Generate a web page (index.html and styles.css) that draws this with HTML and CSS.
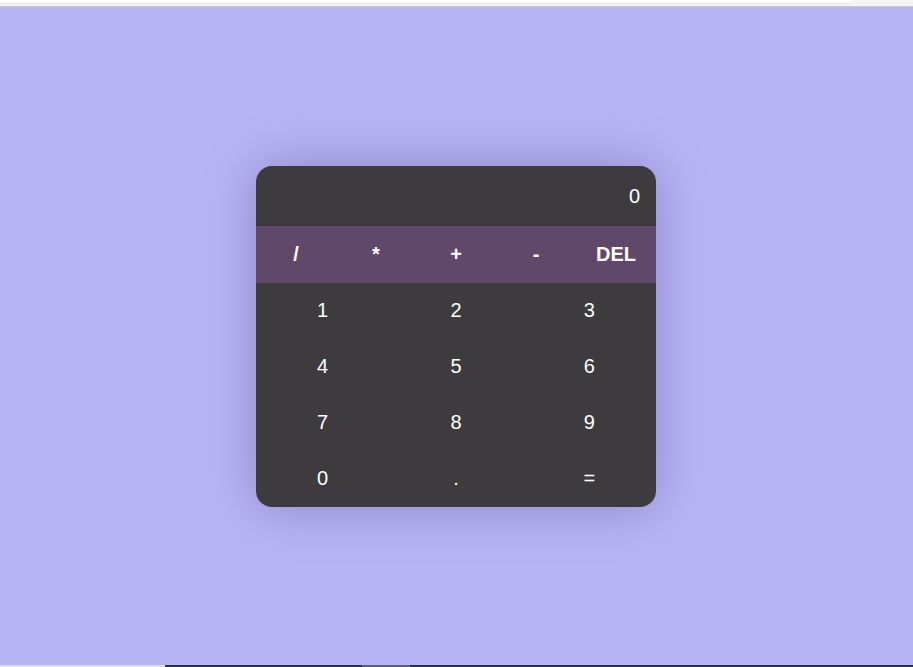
FILE: index.html
```html
<!DOCTYPE html>
<html>
<head>
<meta charset="utf-8">
<link rel="stylesheet" href="styles.css">
</head>
<body>
<div class="topbar"><div class="tab"></div><div class="tab-rest"></div></div>
<main class="stage">
  <div class="calc">
    <div class="display">0</div>
    <div class="ops">
      <button class="op">/</button>
      <button class="op">*</button>
      <button class="op">+</button>
      <button class="op">-</button>
      <button class="op">DEL</button>
    </div>
    <div class="digits">
      <button class="key">1</button>
      <button class="key">2</button>
      <button class="key">3</button>
      <button class="key">4</button>
      <button class="key">5</button>
      <button class="key">6</button>
      <button class="key">7</button>
      <button class="key">8</button>
      <button class="key">9</button>
      <button class="key">0</button>
      <button class="key">.</button>
      <button class="key">=</button>
    </div>
  </div>
</main>
<div class="taskbar">
  <div class="tb-left"></div>
  <div class="tb-a"></div>
  <div class="tb-b"></div>
  <div class="tb-c"></div>
</div>
</body>
</html>
```
FILE: styles.css
```css
html, body {
  margin: 0;
  padding: 0;
  height: 667px;
  overflow: hidden;
}
body {
  display: flex;
  flex-direction: column;
  background: #b8b4f4;
  font-family: "Liberation Sans", Arial, sans-serif;
}
.topbar {
  height: 7px;
  display: flex;
  background: #f4f4f4;
  border-bottom: 1px solid #c9c9c9;
  box-sizing: border-box;
}
.tab {
  width: 852px;
  height: 3px;
  background: #fcfcfc;
  border-bottom: 1px solid #e4e4e4;
  border-bottom-right-radius: 3px;
}
.tab-rest { flex: 1; }
.stage {
  flex: 1;
  display: flex;
  align-items: center;
  justify-content: center;
  padding-right: 1px;
}
.calc {
  width: 400px;
  background: #3d3b3e;
  border-radius: 16px;
  overflow: hidden;
  box-shadow: 0 0 50px rgba(60, 50, 120, 0.35);
}
.display {
  height: 60px;
  box-sizing: border-box;
  padding: 0 16px 0 0;
  display: flex;
  align-items: center;
  justify-content: flex-end;
  color: #ffffff;
  font-size: 20px;
  line-height: 1;
}
.ops {
  height: 57px;
  background: #61486a;
  display: grid;
  grid-template-columns: repeat(5, 1fr);
}
.op, .key {
  background: none;
  border: none;
  padding: 0;
  margin: 0;
  color: #ffffff;
  font-family: "Liberation Sans", Arial, sans-serif;
  font-size: 20px;
  cursor: pointer;
}
.op { font-weight: bold; }
.digits {
  display: grid;
  grid-template-columns: repeat(3, 1fr);
  grid-auto-rows: 56px;
}
.taskbar {
  height: 2px;
  display: flex;
}
.tb-left { width: 165px; background: #dedede; }
.tb-a { width: 197px; background: #283044; }
.tb-b { width: 48px; background: #5b6072; }
.tb-c { flex: 1; background: #283044; }
```
